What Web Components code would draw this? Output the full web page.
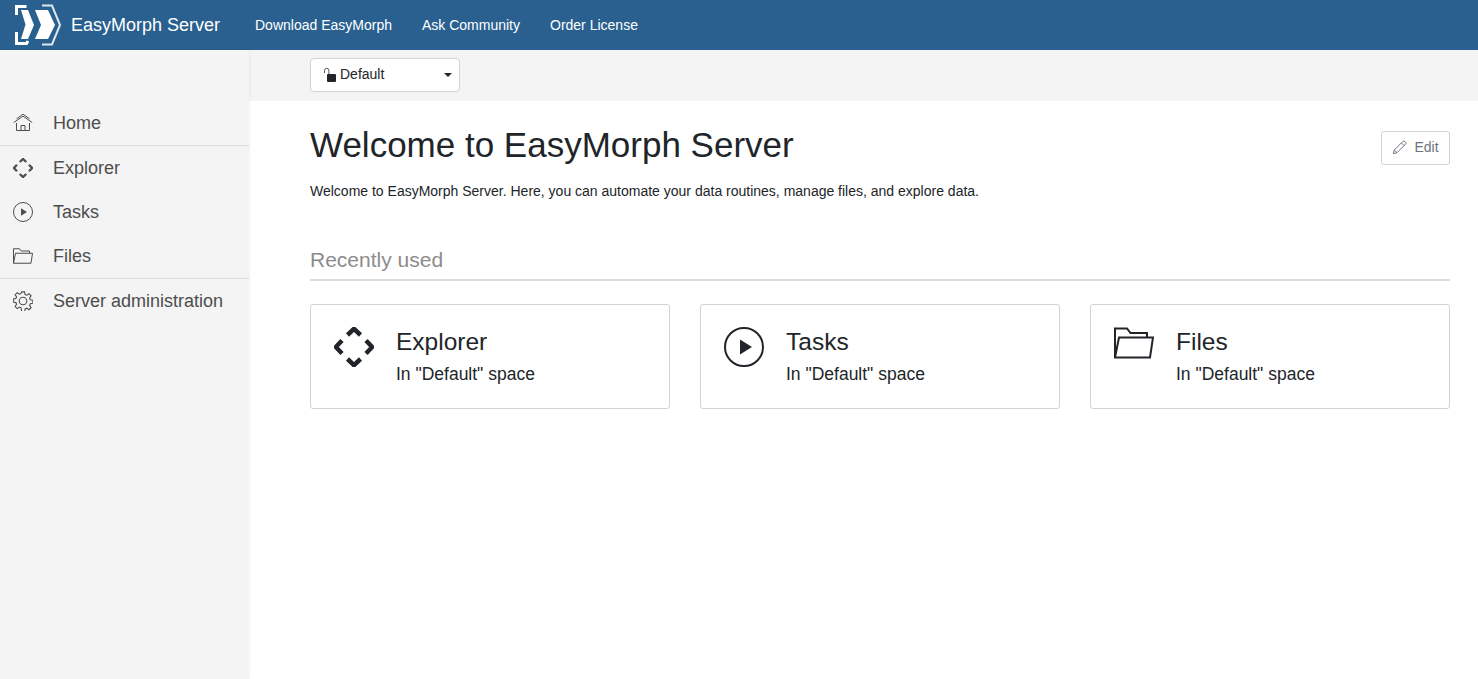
<!DOCTYPE html>
<html><head><meta charset="utf-8">
<style>
html,body{margin:0;padding:0;height:100%;background:#fff;font-family:"Liberation Sans",Arial,sans-serif;overflow:hidden}
</style></head>
<body>
<em-app></em-app>
<script>
const ICONS={
home:`<svg viewBox="0 0 20 20" width="20" height="20" fill="none" stroke="currentColor" stroke-width="1"><path d="M.8 9.500 10 3.200l9.200 6.300"/><path d="M3.500 5.800 10 1.200l6.500 4.600"/><path d="M3.500 10v7.500h13V10"/><path d="M8 17.500V12.500h4v5"/></svg>`,
explorer:`<svg viewBox="0 0 40 40" fill="none" stroke="currentColor" stroke-width="4.500"><path d="M13.500 8 20 1.800 26.500 8"/><path d="M13.500 32 20 38.200 26.500 32"/><path d="M8 13.500 1.800 20 8 26.500"/><path d="M32 13.500 38.200 20 32 26.500"/></svg>`,
tasks:`<svg viewBox="0 0 40 40"><circle cx="20" cy="20" r="19" fill="none" stroke="currentColor" stroke-width="2"/><path d="M16 12.500v15l12-7.500z" fill="currentColor"/></svg>`,
files:`<svg viewBox="0 0 40 32" fill="none" stroke="currentColor" stroke-width="2"><path d="M1 30.500V1.500h12l3.500 4.500H33v4.500"/><path d="M1 30.500 5 10.500h34l-3 20z"/></svg>`,
gear:`<svg viewBox="0 0 20 20" fill="none" stroke="currentColor" stroke-width="1.100"><path d="M8.500 1h3l.5 2.600 1.700.7 2.200-1.500 2.100 2.100-1.500 2.200.7 1.700 2.600.5v3l-2.600.5-.7 1.700 1.500 2.200-2.100 2.100-2.200-1.500-1.700.7-.5 2.600h-3L8 16.900l-1.700-.7-2.200 1.500L2 15.600l1.500-2.200-.7-1.700L.2 11.200v-3L2.800 7.700l.7-1.700L2 3.800 4.100 1.700l2.200 1.500L8 2.500z" transform="translate(.1 -.1)"/><circle cx="10" cy="10" r="3.800"/></svg>`
};
function def(name,html){
  customElements.define(name,class extends HTMLElement{
    constructor(){super();const s=this.attachShadow({mode:'open'});s.innerHTML=typeof html==='function'?html(this):html;}
  });
}
def('em-logo',`<style>:host{display:block;width:46px;height:50px}svg{display:block}</style>
<svg width="46" height="50" viewBox="0 0 46 50">
<g transform="translate(-15 0)">
<path fill="#fff" d="M21 10h7l6 15-6 14h-7l4.500-14.500z"/>
<path fill="#fff" d="M35 10h13l7 15-7 14H35l6-14z"/>
<path fill="none" stroke="#fff" stroke-width="3" d="M26.500 6.500H16.500V15"/>
<path fill="none" stroke="#fff" stroke-width="3" d="M16.500 32v11.500h10l1.500-2.500"/>
<path fill="none" stroke="#dce7f0" stroke-width="2" d="M42 5.500h10L60 25l-8 19.500H42"/>
</g></svg>`);
def('em-topbar',`<style>
:host{display:flex;align-items:center;height:50px;background:#29608f;color:#fff;padding-left:15px;box-sizing:border-box;flex:none}
.b{font-size:18px;margin-left:10px;margin-right:20px;line-height:50px;white-space:nowrap;width:149px}
</style><em-logo></em-logo><span class="b">EasyMorph Server</span><slot></slot>`);
def('em-navlink',`<style>:host{display:block;font-size:14px;color:#fff;padding:0 15px;line-height:50px;white-space:nowrap}</style><slot></slot>`);
def('em-sideitem',h=>`<style>
:host{display:flex;align-items:center;height:44px;color:#4d4d4d;font-size:18px;padding-left:13px;box-sizing:border-box;white-space:nowrap}
:host([sep]){height:45px;border-bottom:1px solid #dedede}
.i{width:20px;height:20px;display:flex;align-items:center;justify-content:center;margin-right:20px;flex:none}
.i svg{display:block;width:20px;height:20px}
</style><span class="i">${ICONS[h.getAttribute('icon')]}</span><slot></slot>`);
def('em-sidebar',`<style>
:host{display:block;width:249px;flex:none;background:#f4f4f4;padding-top:51px;box-sizing:border-box;box-shadow:1px 0 2px rgba(0,0,0,.05);position:relative;z-index:1}
</style><slot></slot>`);
def('em-select',`<style>
:host{display:flex;align-items:center;width:150px;height:34px;box-sizing:border-box;background:#fff;border:1px solid #ced4da;border-radius:4px;font-size:14px;color:#212529;padding:0 0 2px 12px;position:relative}
svg{display:block;margin:2px 3px 0 0}
.c{margin:2px 7px 0 auto;width:0;height:0;border-left:4px solid transparent;border-right:4px solid transparent;border-top:4px solid #212529}
</style><svg width="14" height="16" viewBox="0 0 14 16"><path d="M1.500 6V3.500a2.200 2.200 0 0 1 4.400 0V7" fill="none" stroke="#555" stroke-width="1"/><rect x="4" y="7" width="9" height="8" rx="1" fill="#212529"/></svg><slot></slot><span class="c"></span>`);
def('em-toolbar',`<style>:host{display:flex;align-items:flex-start;height:51px;background:#f4f4f4;padding:8px 0 0 61px;flex:none;box-sizing:border-box}</style><slot></slot>`);
def('em-editbtn',`<style>
:host{display:flex;align-items:center;justify-content:center;gap:7px;width:69px;height:34px;box-sizing:border-box;border:1px solid #ced4da;border-radius:3px;color:#6c757d;font-size:14px;background:#fff;padding-bottom:2px}
svg{display:block}
</style><svg width="15" height="15" viewBox="0 0 15 15" fill="none" stroke="#6c757d" stroke-width="1"><path d="M1.300 13.700 2.300 10 10.800 1.500a1.400 1.400 0 0 1 2 0l.7.700a1.400 1.400 0 0 1 0 2L5 12.700z"/><path d="M9.500 3l2.500 2.500M2.300 10 5 12.700"/></svg><slot></slot>`);
def('em-card',h=>`<style>
:host{display:flex;box-sizing:border-box;height:105px;border:1px solid #d2d2d2;border-radius:3px;padding:22px 0 0 23px;color:#212529;background:#fff}
.i{width:40px;height:40px;flex:none;margin-right:22px}
.i svg{display:block;width:40px;height:${h.getAttribute('icon')==='files'?'32px':'40px'}}
.t{font-size:24.5px;line-height:29px}
.s{font-size:17.5px;line-height:24px;margin-top:6px}
</style><span class="i">${ICONS[h.getAttribute('icon')]}</span><div><div class="t">${h.getAttribute('title')}</div><div class="s"><slot></slot></div></div>`);
def('em-main',`<style>
:host{display:block;padding:0 28px 0 61px;flex:1;color:#212529}
.head{display:flex;justify-content:space-between;align-items:flex-start;padding-top:22px}
h1{font-size:35px;font-weight:400;line-height:43px;margin:0}
.edit{margin-top:8px}
p{font-size:14px;line-height:21px;margin:15px 0 0}
h2{font-size:21px;font-weight:400;color:#8c8c8c;line-height:24px;margin:46px 0 0;padding-bottom:7px;border-bottom:2px solid #dcdcdc}
.cards{display:grid;grid-template-columns:repeat(3,360px);column-gap:30px;margin-top:23px}
</style>
<div class="head"><h1>Welcome to EasyMorph Server</h1><em-editbtn class="edit">Edit</em-editbtn></div>
<p>Welcome to EasyMorph Server. Here, you can automate your data routines, manage files, and explore data.</p>
<h2>Recently used</h2>
<div class="cards"><slot></slot></div>`);
def('em-app',`<style>
:host{display:flex;flex-direction:column;height:679px;overflow:hidden}
.r{display:flex;flex:1;min-height:0}
.c{display:flex;flex-direction:column;flex:1;min-width:0}
</style>
<em-topbar><em-navlink>Download EasyMorph</em-navlink><em-navlink>Ask Community</em-navlink><em-navlink>Order License</em-navlink></em-topbar>
<div class="r">
<em-sidebar>
<em-sideitem icon="home" sep>Home</em-sideitem>
<em-sideitem icon="explorer">Explorer</em-sideitem>
<em-sideitem icon="tasks">Tasks</em-sideitem>
<em-sideitem icon="files" sep>Files</em-sideitem>
<em-sideitem icon="gear">Server administration</em-sideitem>
</em-sidebar>
<div class="c">
<em-toolbar><em-select>Default</em-select></em-toolbar>
<em-main>
<em-card icon="explorer" title="Explorer">In "Default" space</em-card>
<em-card icon="tasks" title="Tasks">In "Default" space</em-card>
<em-card icon="files" title="Files">In "Default" space</em-card>
</em-main>
</div></div>`);
</script>
</body></html>
